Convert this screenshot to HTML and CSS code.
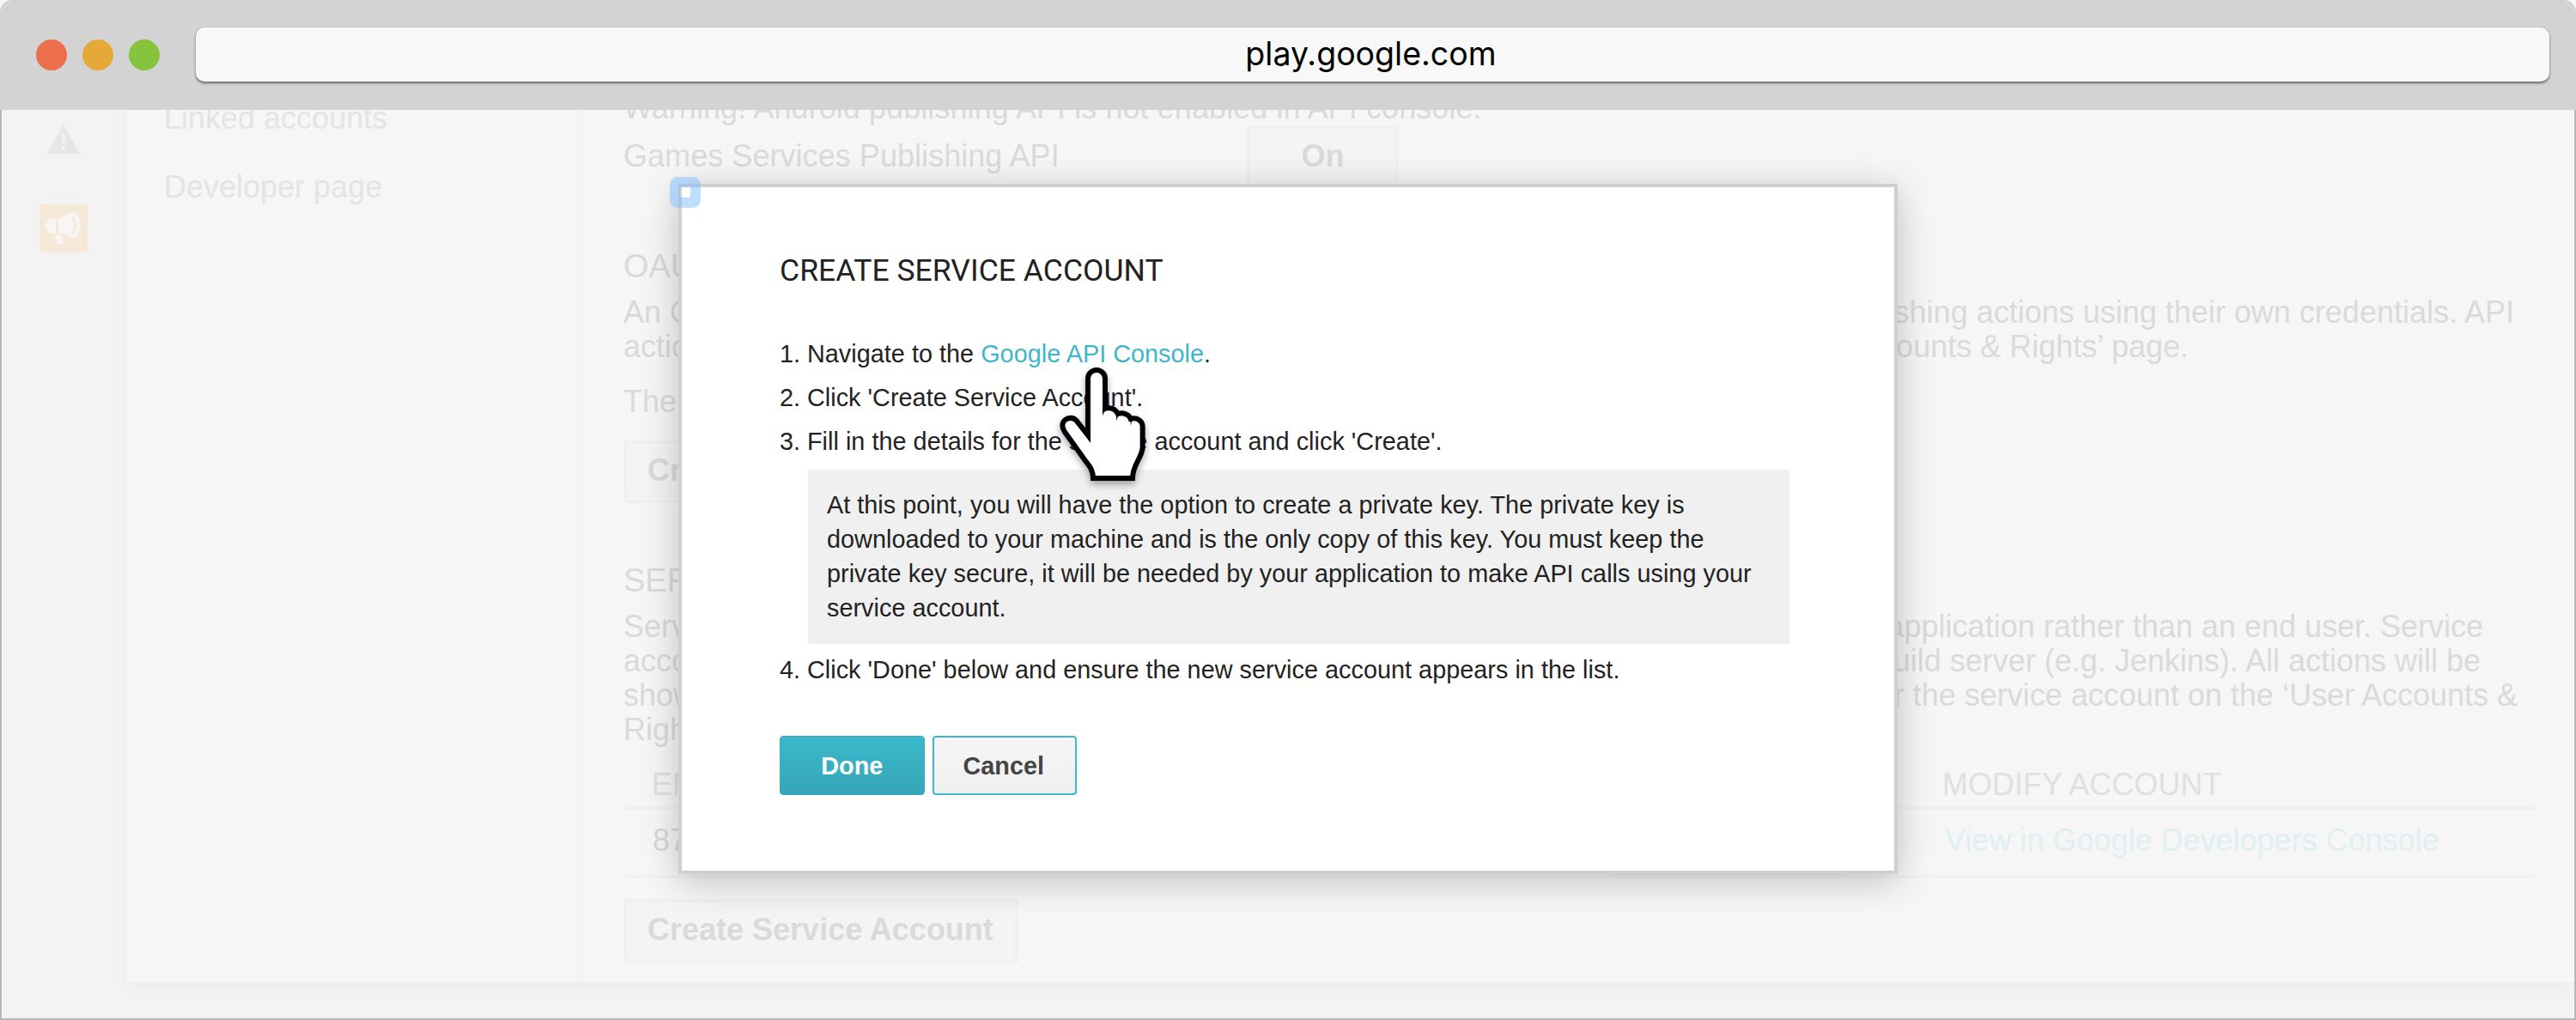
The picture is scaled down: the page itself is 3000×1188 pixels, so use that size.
FILE: index.html
```html
<!DOCTYPE html>
<html lang="en">
<head>
<meta charset="utf-8">
<title>play.google.com</title>
<link rel="stylesheet" href="styles.css">
</head>
<body>
<div class="browser">
  <header class="toolbar">
    <div class="lights">
      <span class="light red"></span><span class="light amber"></span><span class="light green"></span>
    </div>
    <div class="address">play.google.com</div>
  </header>

  <div class="viewport">
    <aside class="rail">
      <svg class="warn" width="40" height="36" viewBox="0 0 40 36"><path d="M20 1 39 35H1Z" fill="#e6e6e6"/><path d="M18 11h4v12h-4zM18 26h4v5h-4z" fill="#f1f1f1"/></svg>
      <div class="news">
        <svg width="56" height="56" viewBox="0 0 56 56"><g fill="#f7f6f5"><path d="M19 16c-8 0-12 4-12 9s4 9 12 9zM17 37l8-1 3 10h-6z"/><path fill-rule="evenodd" d="M22 16c7 0 12-7 18-7 4 0 7 7 7 15s-3 15-7 15c-6 0-11-6-18-6zM36 16c3 2 4 5 4 9s-2 7-4 8c2 3 7 2 7-9 0-10-5-11-7-8z"/></g></svg>
      </div>
    </aside>

    <div class="panel">
      <nav class="menu">
        <a>Linked accounts</a>
        <a>Developer page</a>
      </nav>
      <main class="content">
        <p class="line">Warning! Android publishing API is not enabled in API console.</p>
        <div class="setting">
          <span class="setting-name">Games Services Publishing API</span>
          <span class="btn toggle">On</span>
        </div>

        <h2>OAUTH</h2>
        <p class="line split r75"><span>An OAuth</span><span>publishing actions using their own credentials. API</span></p>
        <p class="line split r453"><span>actions</span><span>Accounts &amp; Rights’ page.</span></p>
        <p class="line spaced">The</p>
        <span class="btn oauth">Create</span>

        <h2>SERVICE</h2>
        <p class="line split r107"><span>Service</span><span>application rather than an end user. Service</span></p>
        <p class="line split r110"><span>accounts</span><span>build server (e.g. Jenkins). All actions will be</span></p>
        <p class="line split r67"><span>shown</span><span>for the service account on the ‘User Accounts &amp;</span></p>
        <p class="line">Rights’</p>

        <div class="table">
          <div class="row head"><span>EMAIL</span><span></span><span>MODIFY ACCOUNT</span></div>
          <div class="row"><span class="num">87</span><span class="perm"></span><a class="link">View in Google Developers Console</a></div>
        </div>
        <span class="btn create">Create Service Account</span>
      </main>
    </div>

    <section class="modal">
      <span class="ring"></span>
      <h1>CREATE SERVICE ACCOUNT</h1>
      <ol class="steps">
        <li><span class="n">1.</span><span>Navigate to the <a>Google API Console</a>.</span></li>
        <li><span class="n">2.</span><span>Click 'Create Service Account'.</span></li>
        <li><span class="n">3.</span><span>Fill in the details for the service account and click 'Create'.</span></li>
      </ol>
      <div class="note">At this point, you will have the option to create a private key. The private key is<br>downloaded to your machine and is the only copy of this key. You must keep the<br>private key secure, it will be needed by your application to make API calls using your<br>service account.</div>
      <ol class="steps last">
        <li><span class="n">4.</span><span>Click 'Done' below and ensure the new service account appears in the list.</span></li>
      </ol>
      <div class="actions">
        <span class="action done">Done</span>
        <span class="action cancel">Cancel</span>
      </div>
    </section>

    <svg class="cursor" width="260" height="180" viewBox="0 0 780 540">
      <path d="M279 471C279 437 260 422 250 407L180 309C166 289 172 270 188 263C202 258 214 262 222 271L261 321V123A30 30 0 0 1 321 123V227C343 222 358 231 366 246C385 240 404 248 410 263C434 257 452 271 452 291V361C452 400 417 420 417 471Z" fill="#fff" stroke="#000" stroke-width="18"/>
      <path d="M252 312h18v35zM312 230h24q-22 6-24 24zM356 238l20 4q-13 12-15 30q0-18-5-34zM403 254l22 5q-13 12-14 29q0-20-8-34z"/>
    </svg>
  </div>
</div>
</body>
</html>
```
FILE: styles.css
```css
* { box-sizing: border-box; }
body { margin: 0; background: #f4f8fa; font-family: "Liberation Sans", Arial, sans-serif; }
h1, h2, p, ol { margin: 0; padding: 0; font-weight: 400; }
.browser { width: 3000px; height: 1188px; display: flex; flex-direction: column; overflow: hidden; }

.toolbar { height: 128px; flex: none; display: flex; align-items: flex-start; background: #d3d3d3; border-radius: 14px 14px 0 0; padding: 32px 31px 0 42px; }
.lights { display: flex; gap: 18px; padding-top: 14px; width: 186px; }
.light { width: 36px; height: 36px; border-radius: 50%; }
.red { background: #eb6f4d; }
.amber { background: #e6a937; }
.green { background: #86c43d; }
.address { flex: 1; height: 63px; border-radius: 10px; background: #f8f8f8; box-shadow: 0 2px 3px rgba(0,0,0,.5), 0 0 1px rgba(0,0,0,.3); font: 37.5px/61px Inter, sans-serif; text-align: center; padding-right: 4px; color: #000; }

.viewport { position: relative; flex: 1; display: flex; align-items: flex-start; overflow: hidden; background: #f3f3f3; border: solid #b4b8bb; border-width: 0 2px 2px; }
.rail { width: 146px; flex: none; display: flex; flex-direction: column; align-items: center; padding: 16px 2px 0 0; }
.news { width: 56px; height: 56px; margin-top: 58px; border-radius: 4px; background: #f6e9d9; }

.panel { flex: 1; height: 1016px; display: flex; background: #f6f6f6; box-shadow: 0 4px 16px rgba(0,0,0,.035); color: #dadada; font-size: 36px; line-height: 40px; }
.menu { width: 532px; flex: none; border-right: 10px solid #f3f3f3; padding-left: 43px; color: #e4e4e4; }
.menu a { display: block; margin-top: 40px; }
.menu a:first-child { margin-top: -10px; }
.content { flex: 1; padding-left: 46px; }
.line { white-space: nowrap; }
.line:first-child { margin-top: -22px; letter-spacing: .07px; }
.split { display: flex; justify-content: space-between; }
.r75 { padding-right: 70px; }
.r453 { padding-right: 449px; }
.r107 { padding-right: 106px; }
.r110 { padding-right: 109px; }
.r67 { padding-right: 66px; }
.spaced { margin-top: 24px; }
.setting { display: flex; height: 74px; align-items: center; }
.setting-name { width: 726px; padding-bottom: 3px; letter-spacing: .05px; }
.content h2 { margin: 70px 0 14px; font-size: 38px; line-height: 40px; white-space: nowrap; }

.btn { display: flex; align-items: center; border: 4px solid #f0f0f0; border-radius: 4px; background: #f4f4f4; font-weight: 700; padding: 0 0 3px 24px; height: 74px; white-space: nowrap; }
.toggle { width: 177px; padding-left: 0; justify-content: center; }
.oauth { width: 400px; margin-top: 25px; height: 73px; }
.create { width: 460px; height: 75px; margin-top: 24px; }

.table { width: 2226px; margin: 24px 0 0 1px; }
.row { display: grid; grid-template-columns: 1117px 276px 1fr; padding-left: 32px; height: 49px; border-bottom: 4px solid #f1f1f1; color: #e0e0e0; }
.row > :nth-child(3) { padding-left: 110px; }
.row + .row { height: 80px; align-items: end; }
.row .num, .row .link { padding-bottom: 20px; }
.row .num { color: #d8d8d8; padding-left: 1px; }
.row .link { padding-left: 113px; color: #e0eff1; }
.perm { height: 70px; border: 2px solid #d6eaec; border-radius: 4px; }

.modal { position: absolute; left: 788px; top: 86px; width: 1420px; height: 804px; border: 4px solid #cfcfcf; background: #fff; box-shadow: 0 8px 40px rgba(0,0,0,.22); padding: 77px 118px 0 114px; color: #222; font-size: 28.8px; line-height: 40px; letter-spacing: .03px; }
.modal h1 { font: 35.5px/40px Roboto, sans-serif; }
.steps { list-style: none; margin-top: 57px; display: grid; row-gap: 11px; }
.steps li { display: flex; white-space: nowrap; }
.n { width: 32px; flex: none; }
.steps a { color: #3fb5cb; }
.note { margin: 13px 0 10px 33px; width: 1143px; height: 203px; padding: 22px 22px 0; background: #f0f0f0; white-space: nowrap; line-height: 39.9px; }
.last { margin-top: 0; }
.actions { display: flex; gap: 9px; margin-top: 57px; }
.action { width: 168.5px; height: 69px; border-radius: 4px; display: flex; align-items: center; justify-content: center; font-weight: 700; }
.done { color: #fff; background: linear-gradient(#3bb8cb, #35a6b8); border: 1px solid #35a9bb; }
.cancel { color: #444; background: linear-gradient(#f6f6f6, #efefef); border: 2px solid #3fb8cb; padding-right: 2px; }
.ring { position: absolute; left: -14px; top: -12px; width: 36px; height: 36px; border: 12px solid rgba(126,190,255,.5); border-radius: 9px; }
.cursor { position: absolute; left: 1178px; top: 272px; filter: drop-shadow(0 4px 4px rgba(0,0,0,.35)); }
```
